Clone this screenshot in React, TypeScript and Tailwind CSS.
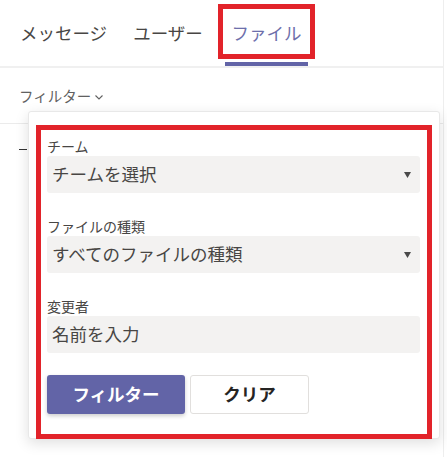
import React from 'react';

function Caret() {
  return (
    <svg width="7" height="6" viewBox="0 0 7 6" className="shrink-0">
      <path d="M0 0 H7 L3.5 6 Z" fill="#4a4a4a" />
    </svg>
  );
}

function SelectBox({ value }: { value: string }) {
  return (
    <div className="h-[37px] rounded-[3px] bg-[#f3f2f1] flex items-center justify-between pl-[5px] pr-[9px]">
      <span className="text-[17.5px] text-[#484644]">{value}</span>
      <Caret />
    </div>
  );
}

export default function App() {
  return (
    <div className="relative w-[447px] h-[457px] overflow-hidden bg-white font-['Noto_Sans_CJK_JP','Noto_Sans',sans-serif]">
      <div className="w-[444px] h-full border-r border-[#eeeeee]">
        {/* Tabs */}
        <div className="h-[68px] border-b-2 border-[#f0f0f0] flex">
          <div className="ml-[12px] w-[103px] h-full flex items-center justify-center text-[17.5px] text-[#484644]">
            メッセージ
          </div>
          <div className="ml-[11px] w-[84px] h-full flex items-center justify-center text-[17.5px] text-[#484644]">
            ユーザー
          </div>
          <div className="relative ml-[15px] w-[83px] h-full flex items-center justify-center text-[17.5px] text-[#6d6fab]">
            ファイル
            <span className="absolute left-0 right-0 bottom-0 h-[4px] bg-[#6264a7]"></span>
            {/* annotation */}
            <span className="absolute -left-[7px] -right-[7px] top-[4px] h-[55px] border-[5px] border-[#e2232a]"></span>
          </div>
        </div>

        {/* Filter toggle */}
        <div className="h-[56px] border-b border-[#ebebeb] flex items-center pl-[19px] gap-[4px] text-[14.5px] text-[#616161]">
          <span>フィルター</span>
          <svg width="8" height="5" viewBox="0 0 8 5" className="mt-[3px]">
            <path d="M0.5 0.5 L4 4 L7.5 0.5" fill="none" stroke="#616161" strokeWidth="1.1" />
          </svg>
        </div>

        {/* List behind popup */}
        <div className="pl-[19px] pt-[25px]">
          <div className="w-[8px] h-[1px] bg-[#333333]"></div>
        </div>
      </div>

      {/* Filter popup */}
      <div className="absolute left-[28px] top-[111px] w-[412px] h-[328px] bg-white border border-[#e8e8e8] rounded-[3px] shadow-[0_4px_14px_rgba(0,0,0,0.13)] px-[7px] pt-[13px]">
        <div className="h-[314px] border-[5px] border-[#e2232a] pt-[6px] pl-[6px] pr-[7px]">
          <div className="h-[20px] leading-[20px] text-[14px] text-[#484644]">チーム</div>
          <SelectBox value="チームを選択" />

          <div className="mt-[23px] h-[20px] leading-[20px] text-[14px] text-[#484644]">ファイルの種類</div>
          <SelectBox value="すべてのファイルの種類" />

          <div className="mt-[23px] h-[20px] leading-[20px] text-[14px] text-[#484644]">変更者</div>
          <div className="h-[37px] rounded-[3px] bg-[#f3f2f1] flex items-center pl-[5px]">
            <span className="text-[17.5px] text-[#484644]">名前を入力</span>
          </div>

          <div className="mt-[22px] flex gap-[5px]">
            <button className="w-[138px] h-[39px] rounded-[3px] bg-[#6264a7] text-white text-[17.5px] font-bold shadow-[0_2px_4px_rgba(0,0,0,0.2)]">
              フィルター
            </button>
            <button className="w-[119px] h-[39px] rounded-[3px] bg-white border border-[#e1dfdd] text-[#252423] text-[17.5px] font-bold">
              クリア
            </button>
          </div>
        </div>
      </div>
    </div>
  );
}
